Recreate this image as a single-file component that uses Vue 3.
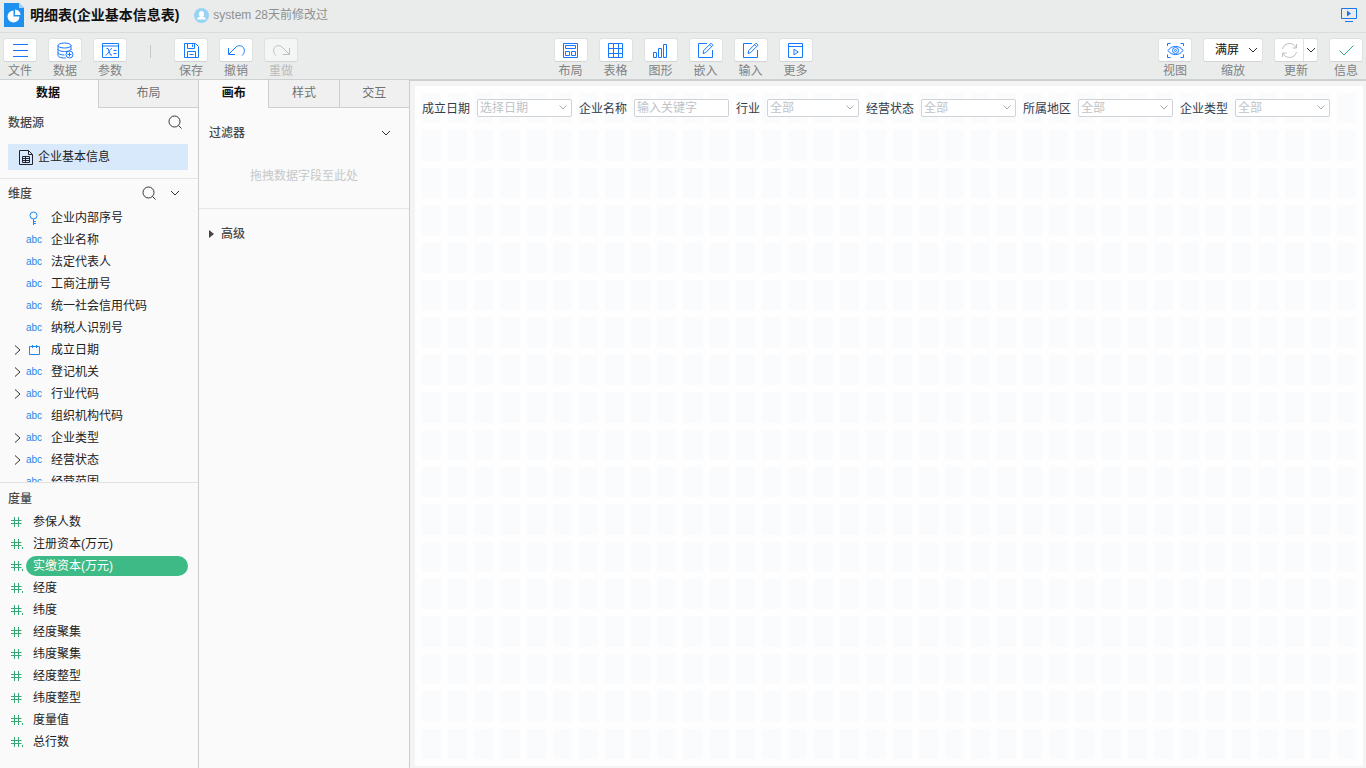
<script setup>
import { ref } from 'vue'

const leftTools = [
  { icon: 'menu', label: '文件' },
  { icon: 'data', label: '数据' },
  { icon: 'param', label: '参数' },
]
const editTools = [
  { icon: 'save', label: '保存' },
  { icon: 'undo', label: '撤销' },
  { icon: 'redo', label: '重做', disabled: true },
]
const insertTools = [
  { icon: 'layout', label: '布局' },
  { icon: 'table', label: '表格' },
  { icon: 'chart', label: '图形' },
  { icon: 'edit', label: '嵌入' },
  { icon: 'edit', label: '输入' },
  { icon: 'more', label: '更多' },
]

const icons = {
  menu: '<path d="M1 2.500h15M1 8.500h15M1 14.500h15"/>',
  data: '<ellipse cx="7.500" cy="3.500" rx="6.500" ry="2.500"/><path d="M1 3.500v3.500c0 1.400 2.900 2.500 6.500 2.500s6.500-1.100 6.500-2.500V3.500M1 7v3.500c0 1.400 2.900 2.500 6.500 2.500M14 7v1M1 10.500v3c0 1.400 2.900 2.500 6.500 2.500h1.500"/><circle cx="12.500" cy="12.500" r="3.500"/><path d="M10.500 12.500h4M12.500 10.500v4"/>',
  param: '<path d="M.5 1.500h16v14h-16zM.5 4h16"/><path d="M4.500 6.500h1.500l2.500 6.500h1.500M10 6.500c-2.500 0-3.500 6.500-6.500 6.500M11.500 8.500h3M11.500 11.500h3"/>',
  save: '<path d="M1.500 1.500h11l3 3v11h-14zM4.500 1.500v5h7v-5M9.500 2.500v2.500M4.500 15.500v-6h8v6M6.500 12.500h4"/>',
  undo: '<path d="M.5 6v6.500h6.500M.8 12.200l7.200-7.200c2-1.800 5.500-1.800 7.200.3s1.700 5.700-1.200 8.200"/>',
  redo: '<path d="M16.500 6v6.500h-6.500M16.200 12.200l-7.200-7.200c-2-1.800-5.500-1.800-7.200.3s-1.700 5.700 1.200 8.200"/>',
  layout: '<path d="M1.500 1.500h14v14h-14zM3.500 3.500h10v3h-10zM3.500 9.500h4v4h-4zM9.500 9.500h4v4h-4z"/>',
  table: '<path d="M1.500 1.500h14v14h-14zM6.500 1.500v14M11.500 1.500v14M1.500 6.500h14M1.500 11.500h14"/>',
  chart: '<path d="M1.500 10.500h3v5h-3zM6.500 6.500h3v9h-3zM11.500 2.500h3v13h-3z"/>',
  edit: '<path d="M10 1.500H1.500v14h14V8M6 11.500l.7-3L14 1.200l2 2-7.300 7.400zM12.500 2.700l2 2"/>',
  more: '<path d="M1.500 1.500h14v14h-14zM1.500 4.500h14M7 7.200v5.600l4.200-2.800z"/>',
  view: '<path d="M.5 4V1.500h3M13.500 1.500h3V4M16.500 12.500v3h-3M3.500 15.500h-3v-3M1 8.500c3.500-5.500 11.500-5.500 15 0-3.500 5.500-11.500 5.500-15 0z"/><circle cx="8.500" cy="8.500" r="3"/><circle cx="8.500" cy="8.500" r="1"/>',
  refresh: '<path d="M1.500 7c.8-3.300 3.500-5.500 7-5.500 3 0 5.500 1.700 6.500 4M15.500 2v4h-4M15.500 10c-.8 3.300-3.500 5.500-7 5.500-3 0-5.500-1.700-6.500-4M1.500 15v-4h4"/>',
  check: '<path d="M1.500 8.500l4.500 4.500 9.500-9.500"/>',
}

const dimensions = [
  { name: '企业内部序号', type: 'key' },
  { name: '企业名称', type: 'abc' },
  { name: '法定代表人', type: 'abc' },
  { name: '工商注册号', type: 'abc' },
  { name: '统一社会信用代码', type: 'abc' },
  { name: '纳税人识别号', type: 'abc' },
  { name: '成立日期', type: 'date', expandable: true },
  { name: '登记机关', type: 'abc', expandable: true },
  { name: '行业代码', type: 'abc', expandable: true },
  { name: '组织机构代码', type: 'abc' },
  { name: '企业类型', type: 'abc', expandable: true },
  { name: '经营状态', type: 'abc', expandable: true },
  { name: '经营范围', type: 'abc' },
]

const measures = [
  { name: '参保人数' },
  { name: '注册资本(万元)', decimal: true },
  { name: '实缴资本(万元)', decimal: true },
  { name: '经度', decimal: true },
  { name: '纬度', decimal: true },
  { name: '经度聚集' },
  { name: '纬度聚集' },
  { name: '经度整型' },
  { name: '纬度整型' },
  { name: '度量值', decimal: true },
  { name: '总行数', decimal: true },
]
const selected = ref('实缴资本(万元)')

const filters = [
  { id: 'date', label: '成立日期', hint: '选择日期' },
  { id: 'name', label: '企业名称', hint: '输入关键字', text: true },
  { id: 'industry', label: '行业', hint: '全部', narrow: true },
  { id: 'status', label: '经营状态', hint: '全部' },
  { id: 'region', label: '所属地区', hint: '全部' },
  { id: 'kind', label: '企业类型', hint: '全部' },
]
</script>

<template>
  <div class="app">
    <header class="title-bar">
      <svg class="logo" width="20" height="24" viewBox="0 0 20 24">
        <path d="M0 0h15l5 5v19H0z" fill="#1e90f0" />
        <path d="M15 0l5 5h-5z" fill="#a6d3f9" />
        <path d="M9.500 7.500a6 6 0 1 0 6 6h-6z" fill="#fff" />
        <path d="M11 6.500a5.500 5.500 0 0 1 5.500 5.500H11z" fill="#fff" />
      </svg>
      <h1>明细表(企业基本信息表)</h1>
      <svg class="avatar" width="15" height="15" viewBox="0 0 15 15">
        <circle cx="7.500" cy="7.500" r="7.500" fill="#98d3f4" />
        <ellipse cx="7.500" cy="6" rx="2.500" ry="3" fill="#fff" />
        <path d="M3 11.500c.3-2 2-3 4.500-3s4.200 1 4.500 3z" fill="#fff" />
      </svg>
      <span class="modified">system 28天前修改过</span>
      <button class="plain preview" aria-label="预览">
        <svg width="18" height="16" viewBox="0 0 18 16" fill="none" stroke="#1677f0">
          <path d="M1.500 1.500h15v10h-15zM5 14.500h8" />
          <path d="M7 3.500v6l4-3z" fill="#1677f0" stroke="none" />
        </svg>
      </button>
    </header>

    <nav class="toolbar">
      <div class="tools">
        <button v-for="t in leftTools" :key="t.label" class="tool">
          <span class="face"><svg class="icon" viewBox="0 0 17 17" v-html="icons[t.icon]" /></span>
          <span>{{ t.label }}</span>
        </button>
        <i class="divider" />
        <button v-for="t in editTools" :key="t.label" class="tool" :disabled="t.disabled">
          <span class="face"><svg class="icon" viewBox="0 0 17 17" v-html="icons[t.icon]" /></span>
          <span>{{ t.label }}</span>
        </button>
      </div>
      <div class="tools">
        <button v-for="t in insertTools" :key="t.label" class="tool">
          <span class="face"><svg class="icon" viewBox="0 0 17 17" v-html="icons[t.icon]" /></span>
          <span>{{ t.label }}</span>
        </button>
      </div>
      <div class="tools end">
        <button class="tool">
          <span class="face"><svg class="icon" viewBox="0 0 17 17" v-html="icons.view" /></span>
          <span>视图</span>
        </button>
        <div class="tool">
          <span class="face zoom">
            <select id="zoom"><option>满屏</option></select>
            <svg class="chevron" viewBox="0 0 10 6"><path d="M1 1l4 4 4-4" /></svg>
          </span>
          <label for="zoom">缩放</label>
        </div>
        <div class="tool">
          <span class="face split">
            <button class="plain refresh" aria-label="更新"><svg class="icon muted" viewBox="0 0 17 17" v-html="icons.refresh" /></button>
            <button class="plain drop" aria-label="更新选项"><svg class="chevron" viewBox="0 0 10 6"><path d="M1 1l4 4 4-4" /></svg></button>
          </span>
          <span>更新</span>
        </div>
        <button class="tool">
          <span class="face"><svg class="icon green" viewBox="0 0 17 17" v-html="icons.check" /></span>
          <span>信息</span>
        </button>
      </div>
    </nav>

    <main class="body">
      <aside class="data-panel">
        <div class="tabs halves">
          <button class="tab active">数据</button>
          <button class="tab">布局</button>
        </div>
        <section class="source">
          <div class="heading source-heading">
            <h2>数据源</h2>
            <button class="plain" aria-label="搜索数据源">
              <svg class="search" viewBox="0 0 14 14"><circle cx="6.500" cy="6.500" r="5.500" /><path d="M10.500 10.500l3 3" /></svg>
            </button>
          </div>
          <button class="source-item">
            <svg width="14" height="15" viewBox="0 0 14 15" fill="none" stroke="#23232f">
              <path d="M.5.5h9l4 4v10h-13zM9.500.5v4h4M3.500 6.500h7v6h-7zM3.500 8.500h7M3.500 10.500h7M6.500 6.500v6" />
            </svg>
            <span>企业基本信息</span>
          </button>
        </section>

        <section class="dimensions">
          <div class="heading">
            <h2>维度</h2>
            <button class="plain" aria-label="搜索维度">
              <svg class="search" viewBox="0 0 14 14"><circle cx="6.500" cy="6.500" r="5.500" /><path d="M10.500 10.500l3 3" /></svg>
            </button>
            <button class="plain fold" aria-label="维度菜单">
              <svg class="chevron" viewBox="0 0 10 6"><path d="M1 1l4 4 4-4" /></svg>
            </button>
          </div>
          <ul>
            <li v-for="d in dimensions" :key="d.name">
              <button v-if="d.expandable" class="plain caret" :aria-label="'展开' + d.name">
                <svg width="7" height="10" viewBox="0 0 7 10" fill="none" stroke="#333"><path d="M1 .5L6 5 1 9.500" /></svg>
              </button>
              <span v-else class="caret" />
              <span class="kind">
                <svg v-if="d.type === 'key'" width="10" height="14" viewBox="0 0 10 14" fill="none" stroke="#1e88f0"><circle cx="4.500" cy="4.500" r="3.500" /><path d="M4.500 8v6M4.500 10.500h2.500M4.500 12.500h2.500" /></svg>
                <svg v-else-if="d.type === 'date'" width="11" height="10" viewBox="0 0 11 10" fill="none" stroke="#1e88f0"><path d="M.5 1.500h10v8H.5zM3.500 0v3M7.500 0v3" /></svg>
                <template v-else>abc</template>
              </span>
              <span>{{ d.name }}</span>
            </li>
          </ul>
        </section>

        <section class="measures">
          <div class="heading"><h2>度量</h2></div>
          <ul>
            <li v-for="m in measures" :key="m.name">
              <svg width="14" height="10" viewBox="0 0 14 10" fill="none" stroke="#36a873">
                <path d="M3.500 0v10M7.500 0v10M0 3.500h10.500M0 6.500h10.500" />
                <path v-if="m.decimal" d="M11.500 8v2" />
              </svg>
              <button class="measure" :class="{ selected: m.name === selected }" @click="selected = m.name">{{ m.name }}</button>
            </li>
          </ul>
        </section>
      </aside>

      <aside class="style-panel">
        <div class="tabs">
          <button class="tab active">画布</button>
          <button class="tab">样式</button>
          <button class="tab">交互</button>
        </div>
        <section class="filter-box">
          <div class="filter-heading">
            <h2>过滤器</h2>
            <button class="plain" aria-label="折叠过滤器"><svg class="chevron" viewBox="0 0 10 6"><path d="M1 1l4 4 4-4" /></svg></button>
          </div>
          <p>拖拽数据字段至此处</p>
        </section>
        <button class="plain advanced">
          <svg width="5" height="8" viewBox="0 0 5 8"><path d="M0 0l5 4-5 4z" fill="#444" /></svg>
          <span>高级</span>
        </button>
      </aside>

      <section class="stage">
        <div class="canvas">
          <div class="cells"><i v-for="n in 648" :key="n" /></div>
          <form class="filters" @submit.prevent>
            <template v-for="f in filters" :key="f.id">
              <label :for="f.id">{{ f.label }}</label>
              <input v-if="f.text" :id="f.id" class="field" type="text" :placeholder="f.hint">
              <span v-else class="pick" :class="{ narrow: f.narrow }">
                <select :id="f.id" class="field"><option>{{ f.hint }}</option></select>
                <svg class="chevron" viewBox="0 0 8 5"><path d="M.5.5l3.500 3.500 3.500-3.500" /></svg>
              </span>
            </template>
          </form>
        </div>
      </section>
    </main>
  </div>
</template>

<style>
body { background: #f4f4f4; }
</style>

<style scoped>
.app, .app * { box-sizing: border-box; }
.app {
  display: flex;
  flex-direction: column;
  height: 100vh;
  overflow: hidden;
  font: 12px/18px "Liberation Sans", "Noto Sans CJK SC", sans-serif;
  color: #222;
}
button, select, input { font: inherit; color: inherit; margin: 0; }
button { padding: 0; border: 0; background: none; cursor: pointer; }
svg { display: block; flex: none; }
h1, h2, p, ul { margin: 0; padding: 0; }
h2 { font-size: 12px; font-weight: 500; color: #484848; }
li { list-style: none; }
.plain { display: flex; align-items: center; justify-content: center; }
.chevron { width: 10px; height: 6px; fill: none; stroke: #333; }
.search { width: 14px; height: 14px; fill: none; stroke: #333; }

.title-bar {
  display: flex;
  align-items: center;
  flex: none;
  height: 33px;
  padding: 0 8px 2px 4px;
  background: #eaecec;
  border-bottom: 1px solid #dadcdc;
}
h1 { margin-left: 6px; font-size: 14px; line-height: 20px; font-weight: 700; color: #111; }
.avatar { margin-left: 15px; }
.modified { margin-left: 4px; color: #8e9090; }
.preview { margin-left: auto; }

.toolbar {
  display: grid;
  grid-template-columns: 1fr auto 1fr;
  flex: none;
  height: 47px;
  padding: 5px 3px 0;
  background: #eaecec;
  border-bottom: 1px solid #cdd0d0;
}
.tools { display: flex; align-items: flex-start; gap: 11px; }
.end { justify-content: flex-end; }
.tool { display: flex; flex-direction: column; align-items: center; line-height: 18px; color: #808282; }
.tool:disabled { color: #b9bbbb; }
.face {
  display: flex;
  align-items: center;
  justify-content: center;
  width: 34px;
  height: 24px;
  background: #fff;
  border: 1px solid #dfe1e2;
  border-bottom-color: #d2d4d5;
  border-radius: 3px;
}
.tool:disabled .face { background: #f4f5f5; }
.icon { width: 17px; height: 17px; fill: none; stroke: #1677ff; }
.tool:disabled .icon, .icon.muted { stroke: #bcbebf; }
.icon.green { stroke: #35a878; }
.divider { width: 1px; height: 13px; margin: 7px 12px 0; background: #c6c8c8; }
.zoom { width: 60px; position: relative; }
.zoom select { width: 100%; height: 22px; padding: 0 11px; appearance: none; border: 0; background: none; color: #111; }
.zoom .chevron { position: absolute; right: 4px; top: 8px; pointer-events: none; }
.split { width: 44px; }
.refresh { flex: 1; height: 22px; }
.drop { width: 14px; height: 22px; border-left: 1px solid #dfe1e2; }

.body { display: flex; flex: 1; min-height: 0; }
.data-panel, .style-panel { display: flex; flex-direction: column; flex: none; background: #fafafa; border-right: 1px solid #cdcdcd; }
.data-panel { width: 199px; }
.style-panel { width: 211px; }
.tabs { display: flex; flex: none; height: 28px; }
.tab { flex: 1; background: #f0f0f0; color: #707272; border: solid #cfcfcf; border-width: 0 0 1px 1px; padding-bottom: 2px; }
.tab.active { background: #fafafa; border: 0; color: #111; font-weight: 700; }
.halves .active { flex: none; width: 98px; padding-right: 2px; }

.source { padding-bottom: 8px; border-bottom: 1px solid #e6e6e6; }
.heading { display: flex; align-items: center; flex: none; height: 27px; padding: 0 18px 0 8px; }
.heading h2 { flex: 1; padding-top: 2px; }
.source-heading { height: 36px; padding: 0 16px 8px 8px; }
.source-item { display: flex; align-items: center; gap: 5px; width: 180px; height: 26px; margin-left: 8px; padding-left: 11px; background: #d8e9fb; }
.fold { margin-left: 14px; }
.dimensions { display: flex; flex-direction: column; flex: 1; min-height: 0; border-bottom: 1px solid #e2e2e2; }
.dimensions ul { flex: 1; padding-top: 1px; overflow: hidden; }
.dimensions li { display: flex; align-items: center; height: 22px; }
.caret { width: 7px; margin: 0 5px 0 14px; }
.kind { display: flex; justify-content: center; width: 16px; margin-right: 9px; font-size: 10px; color: #2b87e8; }
.measures { flex: none; padding-bottom: 15px; }
.measures .heading { height: 28px; padding-top: 2px; }
.measures li { display: flex; align-items: center; gap: 1px; height: 22px; padding: 0 10px 0 11px; }
.measure { flex: 1; height: 20px; padding: 0 7px; border-radius: 10px; text-align: left; }
.measure.selected { background: #3dba85; color: #fff; }

.filter-box { height: 101px; padding: 16px 18px 0 10px; border-bottom: 1px solid #e6e6e6; }
.filter-heading { display: flex; align-items: center; justify-content: space-between; }
.filter-box p { margin-top: 25px; padding-left: 8px; text-align: center; color: #c6c8c8; }
.advanced { align-self: flex-start; gap: 7px; margin: 16px 0 0 10px; font-weight: 500; color: #484848; }

.stage { display: flex; flex: 1; min-width: 0; padding: 5px 3px 2px 5px; border-top: 1px solid #cdd0d0; background: #f4f4f4; }
.canvas { display: grid; flex: 1; min-width: 0; padding: 7px; background: #fefefe; }
.cells, .filters { grid-area: 1 / 1; min-width: 0; min-height: 0; }
.cells { display: grid; grid-template: repeat(18, 1fr) / repeat(36, 1fr); gap: 7px; }
.cells i { background: #fafbfd; }
.filters { display: flex; align-items: center; align-self: start; gap: 7px; height: 30px; color: #333d4a; }
.filters label { flex: none; padding-top: 2px; }
.pick { position: relative; flex: none; width: 95px; height: 18px; }
.pick.narrow { width: 92px; }
.field { display: block; flex: none; width: 95px; height: 18px; padding: 0 2px; appearance: none; border: 1px solid #d0d2d5; border-radius: 2px; outline: 0; background: #fff; line-height: 16px; color: #c0c3c7; }
.pick .field { width: 100%; }
.field::placeholder { color: #c0c3c7; opacity: 1; }
.pick .chevron { position: absolute; right: 5px; top: 6px; width: 8px; height: 5px; stroke: #aaa; pointer-events: none; }
</style>
